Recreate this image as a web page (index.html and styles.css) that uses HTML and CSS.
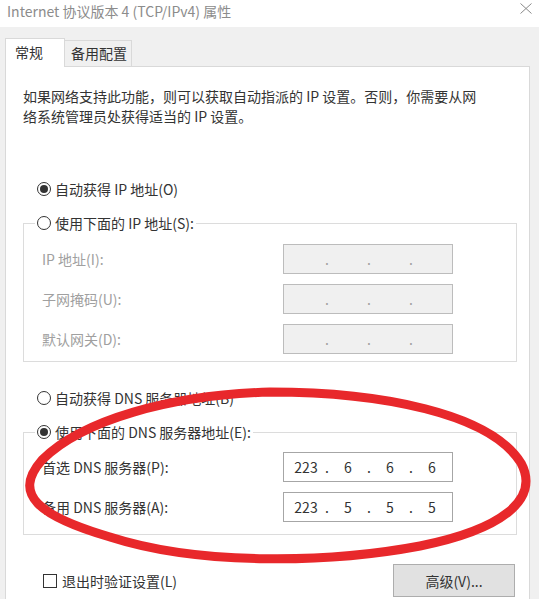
FILE: index.html
```html
<!DOCTYPE html>
<html lang="zh-CN">
<head>
  <meta charset="UTF-8" />
  <title>Internet 协议版本 4 (TCP/IPv4) 属性</title>
  <link rel="stylesheet" href="styles.css">
</head>
<body>

  <div class="titlebar">
    <span class="title">Internet 协议版本 4 (TCP/IPv4) 属性</span>
    <svg class="close" width="12" height="11" viewBox="0 0 12 11">
      <path d="M0.5 0.5 L11.5 10.5 M11.5 0.5 L0.5 10.5" stroke="#8a8a8a" stroke-width="1" fill="none" />
    </svg>
  </div>

  <div class="tabs">
    <div class="tab active">常规</div>
    <div class="tab">备用配置</div>
  </div>

  <div class="panel">
    <p class="intro">如果网络支持此功能，则可以获取自动指派的 IP 设置。否则，你需要从网<br>络系统管理员处获得适当的 IP 设置。</p>

    <div class="option">
      <span class="radio on"></span>自动获得 IP 地址(O)
    </div>

    <fieldset class="group">
      <legend class="option"><span class="radio"></span>使用下面的 IP 地址(S):</legend>
      <div class="rows disabled">
        <span class="label">IP 地址(I):</span>
        <div class="ip"><span class="oct"></span><span class="dot">.</span><span class="oct"></span><span class="dot">.</span><span class="oct"></span><span class="dot">.</span><span class="oct"></span></div>
        <span class="label">子网掩码(U):</span>
        <div class="ip"><span class="oct"></span><span class="dot">.</span><span class="oct"></span><span class="dot">.</span><span class="oct"></span><span class="dot">.</span><span class="oct"></span></div>
        <span class="label">默认网关(D):</span>
        <div class="ip"><span class="oct"></span><span class="dot">.</span><span class="oct"></span><span class="dot">.</span><span class="oct"></span><span class="dot">.</span><span class="oct"></span></div>
      </div>
    </fieldset>

    <div class="option dns-auto">
      <span class="radio"></span>自动获得 DNS 服务器地址(B)
    </div>

    <fieldset class="group dns">
      <legend class="option"><span class="radio on"></span>使用下面的 DNS 服务器地址(E):</legend>
      <div class="rows">
        <span class="label">首选 DNS 服务器(P):</span>
        <div class="ip"><span class="oct">223</span><span class="dot">.</span><span class="oct">6</span><span class="dot">.</span><span class="oct">6</span><span class="dot">.</span><span class="oct">6</span></div>
        <span class="label">备用 DNS 服务器(A):</span>
        <div class="ip"><span class="oct">223</span><span class="dot">.</span><span class="oct">5</span><span class="dot">.</span><span class="oct">5</span><span class="dot">.</span><span class="oct">5</span></div>
      </div>
    </fieldset>

    <div class="footer">
      <label class="check"><span class="box"></span>退出时验证设置(L)</label>
      <button class="btn">高级(V)...</button>
    </div>
  </div>

  <!-- red hand-drawn ring over the DNS block -->
  <svg class="mark" width="539" height="599" viewBox="0 0 539 599">
    <path d="M270 392 C380 392 490 413 521 463 C541 500 500 530 420 546 C330 563 200 566 110 537 C38 516 12 494 42 460 C82 420 170 395 270 392 Z"
          fill="none" stroke="#e8282b" stroke-width="9" stroke-linecap="round" />
  </svg>

</body>
</html>
```

FILE: styles.css
```css
* {
  box-sizing: border-box;
}
html, body {
  margin: 0;
  padding: 0;
}
body {
  position: relative;
  width: 539px;
  height: 599px;
  overflow: hidden;
  background: #f0f0f0;
  font-family: "Noto Sans CJK SC", "Noto Sans", sans-serif;
  font-size: 14px;
  color: #333;
}
.titlebar {
  height: 27px;
  background: #fff;
  display: flex;
  justify-content: space-between;
  align-items: flex-start;
  padding: 1px 7px 0 7px;
}
.title {
  color: #8c8c8c;
  line-height: 20px;
}
.close {
  margin-top: 2px;
}
.tabs {
  position: relative;
  z-index: 1;
  display: flex;
  align-items: flex-end;
  padding: 11px 0 0 5px;
}
.tab {
  width: 67px;
  height: 26px;
  padding-left: 6px;
  line-height: 24px;
  background: #f0f0f0;
  border: 1px solid #d9d9d9;
  border-left: none;
  border-bottom: none;
}
.tab.active {
  width: 60px;
  height: 29px;
  margin-bottom: -1px;
  padding-left: 9px;
  line-height: 26px;
  background: #fff;
  border-left: 1px solid #d9d9d9;
}
.panel {
  height: 540px;
  margin: 0 9px 0 5px;
  padding: 19px 12px 0 17px;
  background: #fff;
  border: 1px solid #d9d9d9;
}
.intro {
  margin: 0;
  line-height: 20px;
}
.option {
  display: flex;
  align-items: center;
  gap: 4px;
  line-height: 20px;
}
.panel > .option {
  margin: 53px 0 0 14px;
}
.panel > .dns-auto {
  margin-top: 26px;
}
.radio {
  width: 14px;
  height: 14px;
  border: 1px solid #333;
  border-radius: 50%;
  display: inline-flex;
  align-items: center;
  justify-content: center;
}
.radio.on::after {
  content: "";
  width: 8px;
  height: 8px;
  border-radius: 50%;
  background: #333;
}
.group {
  margin: 14px 0 0 0;
  padding: 11px 0 7px 0;
  min-width: 0;
  border: 1px solid #dcdcdc;
}
.group legend {
  margin-left: 11px;
  padding: 0 2px;
}
.group.dns {
  padding: 10px 0 12px 0;
}
.rows {
  display: grid;
  grid-template-columns: 241px 170px;
  grid-auto-rows: 30px;
  row-gap: 10px;
  align-items: center;
  padding-left: 18px;
}
.ip {
  height: 30px;
  display: flex;
  align-items: center;
  padding-left: 5px;
  background: #fff;
  border: 1px solid #a6a6a6;
  color: #333;
}
.oct {
  width: 34px;
  text-align: center;
}
.dot {
  width: 8px;
  text-align: center;
}
.disabled .label {
  color: #a0a0a0;
}
.disabled .ip {
  background: #f0f0f0;
  border-color: #bcbcbc;
  color: #a0a0a0;
}
.footer {
  margin-top: 29px;
  display: flex;
  justify-content: space-between;
  align-items: center;
}
.check {
  display: flex;
  align-items: center;
  gap: 5px;
  margin-left: 20px;
}
.box {
  width: 14px;
  height: 14px;
  border: 1px solid #333;
}
.btn {
  width: 122px;
  height: 33px;
  margin-right: 2px;
  font-family: inherit;
  font-size: 14px;
  color: #333;
  background: #e1e1e1;
  border: 1px solid #adadad;
}
.mark {
  position: absolute;
  top: 0;
  left: 0;
  pointer-events: none;
}
```
